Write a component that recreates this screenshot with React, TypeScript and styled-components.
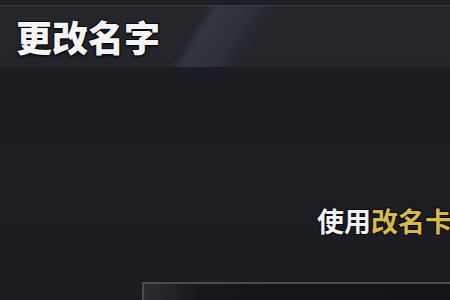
import React from 'react'
import styled, { createGlobalStyle } from 'styled-components'

const GlobalStyle = createGlobalStyle`
  html, body {
    margin: 0;
    padding: 0;
    background: #1c1d22;
    overflow: hidden;
  }
`
const Screen = styled.div`
  width: 450px;
  height: 300px;
  overflow: hidden;
  display: flex;
  flex-direction: column;
  background: #1c1d22;
  font-family: "Noto Sans CJK SC", "Noto Sans", sans-serif;
`
const TopEdge = styled.div`
  flex-shrink: 0;
  height: 6px;
  background: #1e1f24;
  border-bottom: 1px solid #3a3c42;
  box-sizing: border-box;
`
const Header = styled.div`
  flex-shrink: 0;
  height: 61px;
  display: flex;
  align-items: center;
  padding-left: 16px;
  background:
    linear-gradient(
      122deg,
      transparent 0,
      transparent 176px,
      rgba(62, 68, 80, 0.5) 186px,
      rgba(58, 63, 74, 0.45) 212px,
      rgba(50, 54, 64, 0.2) 226px,
      transparent 234px
    ),
    linear-gradient(180deg, #25272d 0%, #23252b 100%);
`
const Title = styled.h1`
  margin: 0;
  margin-top: -2px;
  font-size: 36px;
  font-weight: 900;
  color: #f4f4f4;
  text-shadow:
    -1px -1px 0 #0b0b0d,
    1px -1px 0 #0b0b0d,
    -1px 1px 0 #0b0b0d,
    1px 1px 0 #0b0b0d,
    0 2px 3px rgba(0, 0, 0, 0.6);
`
const Body = styled.div`
  flex: 1;
  min-height: 0;
  overflow: hidden;
  display: flex;
  flex-direction: column;
  background: linear-gradient(180deg, #1c1d22 0%, #1d1e23 60%, #1b1c21 100%);
`
const Hint = styled.div`
  flex-shrink: 0;
  margin-top: 136px;
  padding-left: 317px;
  white-space: nowrap;
  font-size: 27px;
  font-weight: 700;
  line-height: 36px;
  color: #f0f0f0;
  text-shadow:
    -1px -1px 0 #0b0b0d,
    1px -1px 0 #0b0b0d,
    -1px 1px 0 #0b0b0d,
    1px 1px 0 #0b0b0d;
`
const Gold = styled.span`
  color: #d8b94c;
`
const InputBox = styled.div`
  flex-shrink: 0;
  margin-top: 43px;
  margin-left: 142px;
  height: 40px;
  border: 2px solid #4a4c52;
  border-right: none;
  border-bottom: none;
  background: linear-gradient(90deg, #2c2d31 0%, #16171b 18%, #131417 100%);
`

const App = (): JSX.Element => (
  <>
    <GlobalStyle />
    <Screen>
      <TopEdge />
      <Header>
        <Title>更改名字</Title>
      </Header>
      <Body>
        <Hint>
          使用<Gold>改名卡</Gold>
        </Hint>
        <InputBox />
      </Body>
    </Screen>
  </>
)

export default App
